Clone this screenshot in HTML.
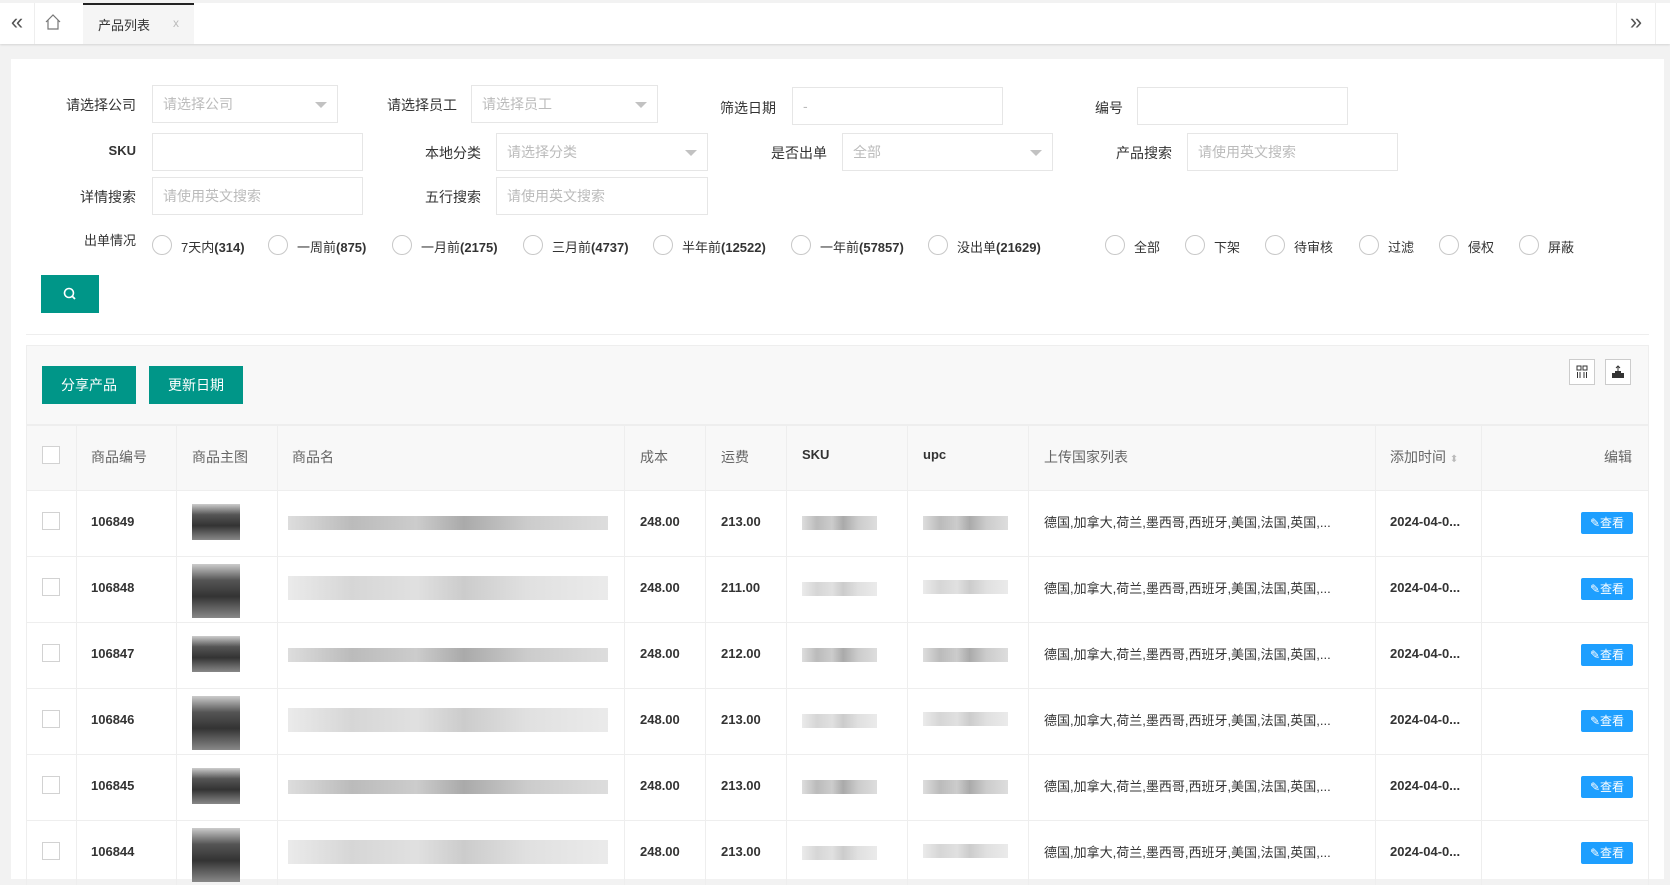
<!DOCTYPE html>
<html><head><meta charset="utf-8"><style>
*{box-sizing:border-box;margin:0;padding:0}
body{width:1670px;height:872px;overflow:hidden;background:#f2f2f2;font-family:"Liberation Sans","Noto Sans CJK SC",sans-serif;font-size:14px;color:#333;position:relative}
.a{position:absolute}
.top{left:0;top:0;width:1670px;height:44px;background:#fff;border-top:3px solid #f2f2f2;box-shadow:0 1px 2px rgba(0,0,0,.12)}
.panel{left:11px;top:59px;width:1653px;height:820px;background:#fff}
.lbl{font-size:14px;color:#333;text-align:right;width:100px}
.inp{height:38px;border:1px solid #e6e6e6;background:#fff;color:#bbb;font-size:14px;padding-left:10px;line-height:36px}
.tri{position:absolute;right:10px;top:16px;border:6px solid transparent;border-top:6px solid #c2c2c2}
.rad{width:20px;height:20px;border:1px solid #c8c8c8;border-radius:50%}
.rt{font-size:13px;color:#333}
.btn{background:#009688;color:#fff;text-align:center;font-size:14px}
.col{top:425px;width:1px;height:460px;background:#eee}
.row{left:26px;width:1623px;height:1px;background:#eee}
.th{top:447px;font-size:14px;color:#666}
.td{font-size:13px;font-weight:bold;color:#333}
.cb{width:18px;height:18px;border:1px solid #d2d2d2;background:#fff}
.view{width:52px;height:22px;background:#1E9FFF;color:#fff;font-size:12px;line-height:22px;text-align:center;border-radius:2px}
.bar{height:14px;background:linear-gradient(90deg,#ddd,#bbb 20%,#ccc 40%,#aaa 55%,#ccc 75%,#ddd)}
.img{width:48px;height:54px;background:linear-gradient(180deg,#ccc,#555 30%,#333 60%,#888)}
.ct{font-size:13px}
</style></head><body>
<div class="a top"></div>
<div class="a" style="left:0;top:3px;width:35px;height:41px;border-right:1px solid #eee;font-size:22px;text-align:center;line-height:38px;color:#555">«</div>
<div class="a" style="left:44px;top:14px"><svg width="18" height="16" viewBox="0 0 18 16"><path d="M2 8 L9 1 L16 8 M4 6 V15 H14 V6" fill="none" stroke="#777" stroke-width="1.2"/></svg></div>
<div class="a" style="left:83px;top:3px;width:111px;height:41px;background:#f5f5f5;border-top:2px solid #222"></div>
<div class="a" style="left:98px;top:15px;font-size:13px">产品列表</div>
<div class="a" style="left:173px;top:16px;font-size:12px;color:#bbb">x</div>
<div class="a" style="left:1616px;top:3px;width:40px;height:41px;border-left:1px solid #eee;border-right:1px solid #eee;font-size:22px;text-align:center;line-height:38px;color:#555">»</div>

<div class="a panel"></div>
<div class="a lbl" style="left:36px;top:95px">请选择公司</div>
<div class="a inp" style="left:152px;top:85px;width:186px">请选择公司<span class="tri"></span></div>
<div class="a lbl" style="left:357px;top:95px">请选择员工</div>
<div class="a inp" style="left:471px;top:85px;width:187px">请选择员工<span class="tri"></span></div>
<div class="a lbl" style="left:676px;top:98px">筛选日期</div>
<div class="a inp" style="left:792px;top:87px;width:211px">-</div>
<div class="a lbl" style="left:1023px;top:98px">编号</div>
<div class="a inp" style="left:1137px;top:87px;width:211px"></div>
<div class="a lbl" style="left:36px;top:143px;font-weight:bold;font-size:13px">SKU</div>
<div class="a inp" style="left:152px;top:133px;width:211px"></div>
<div class="a lbl" style="left:381px;top:143px">本地分类</div>
<div class="a inp" style="left:496px;top:133px;width:212px">请选择分类<span class="tri"></span></div>
<div class="a lbl" style="left:727px;top:143px">是否出单</div>
<div class="a inp" style="left:842px;top:133px;width:211px">全部<span class="tri"></span></div>
<div class="a lbl" style="left:1072px;top:143px">产品搜索</div>
<div class="a inp" style="left:1187px;top:133px;width:211px">请使用英文搜索</div>
<div class="a lbl" style="left:36px;top:187px">详情搜索</div>
<div class="a inp" style="left:152px;top:177px;width:211px">请使用英文搜索</div>
<div class="a lbl" style="left:381px;top:187px">五行搜索</div>
<div class="a inp" style="left:496px;top:177px;width:212px">请使用英文搜索</div>
<div class="a lbl" style="left:36px;top:230px;font-size:13px">出单情况</div>
<div class="a rad" style="left:152px;top:235px"></div><div class="a rt" style="left:181px;top:237px">7天内<b>(314)</b></div>
<div class="a rad" style="left:268px;top:235px"></div><div class="a rt" style="left:297px;top:237px">一周前<b>(875)</b></div>
<div class="a rad" style="left:392px;top:235px"></div><div class="a rt" style="left:421px;top:237px">一月前<b>(2175)</b></div>
<div class="a rad" style="left:523px;top:235px"></div><div class="a rt" style="left:552px;top:237px">三月前<b>(4737)</b></div>
<div class="a rad" style="left:653px;top:235px"></div><div class="a rt" style="left:682px;top:237px">半年前<b>(12522)</b></div>
<div class="a rad" style="left:791px;top:235px"></div><div class="a rt" style="left:820px;top:237px">一年前<b>(57857)</b></div>
<div class="a rad" style="left:928px;top:235px"></div><div class="a rt" style="left:957px;top:237px">没出单<b>(21629)</b></div>
<div class="a rad" style="left:1105px;top:235px"></div><div class="a rt" style="left:1134px;top:237px">全部</div>
<div class="a rad" style="left:1185px;top:235px"></div><div class="a rt" style="left:1214px;top:237px">下架</div>
<div class="a rad" style="left:1265px;top:235px"></div><div class="a rt" style="left:1294px;top:237px">待审核</div>
<div class="a rad" style="left:1359px;top:235px"></div><div class="a rt" style="left:1388px;top:237px">过滤</div>
<div class="a rad" style="left:1439px;top:235px"></div><div class="a rt" style="left:1468px;top:237px">侵权</div>
<div class="a rad" style="left:1519px;top:235px"></div><div class="a rt" style="left:1548px;top:237px">屏蔽</div>
<div class="a btn" style="left:41px;top:275px;width:58px;height:38px"><svg width="16" height="16" viewBox="0 0 16 16" style="margin-top:11px"><circle cx="7" cy="7" r="4.5" fill="none" stroke="#fff" stroke-width="1.6"/><path d="M10 10 L13 13" stroke="#fff" stroke-width="1.8"/></svg></div>
<div class="a" style="left:26px;top:334px;width:1623px;height:1px;background:#eee"></div>
<div class="a" style="left:26px;top:345px;width:1623px;height:80px;background:#f8f8f8;border:1px solid #eee"></div>
<div class="a btn" style="left:42px;top:366px;width:94px;height:38px;line-height:38px">分享产品</div>
<div class="a btn" style="left:149px;top:366px;width:94px;height:38px;line-height:38px">更新日期</div>
<div class="a" style="left:1569px;top:359px;width:26px;height:26px;border:1px solid #ccc;background:#fff"><svg width="24" height="24" viewBox="0 0 24 24"><rect x="7" y="6" width="4" height="4" fill="none" stroke="#333"/><rect x="13" y="6" width="4" height="4" fill="none" stroke="#333"/><path d="M7.5 12v6M10 12v6M14 12v6M16.5 12v6" stroke="#333"/></svg></div>
<div class="a" style="left:1605px;top:359px;width:26px;height:26px;border:1px solid #ccc;background:#fff"><svg width="24" height="24" viewBox="0 0 24 24"><path d="M6 13h12v5H6z" fill="#333"/><path d="M12 6v6M10 8l2-2 2 2" stroke="#333" fill="none"/><rect x="9" y="11" width="6" height="2" fill="#333"/></svg></div>
<div class="a" style="left:26px;top:425px;width:1623px;height:65px;background:#f8f8f8"></div>
<div class="a" style="left:26px;top:425px;width:1623px;height:460px;border:1px solid #eee;border-bottom:none"></div>
<div class="a col" style="left:76px"></div><div class="a col" style="left:176px"></div><div class="a col" style="left:277px"></div><div class="a col" style="left:624px"></div><div class="a col" style="left:705px"></div><div class="a col" style="left:786px"></div><div class="a col" style="left:907px"></div><div class="a col" style="left:1028px"></div><div class="a col" style="left:1375px"></div><div class="a col" style="left:1481px"></div>
<div class="a row" style="top:490px"></div><div class="a row" style="top:556px"></div><div class="a row" style="top:622px"></div><div class="a row" style="top:688px"></div><div class="a row" style="top:754px"></div><div class="a row" style="top:820px"></div>
<div class="a cb" style="left:42px;top:446px"></div>
<div class="a th" style="left:91px">商品编号</div>
<div class="a th" style="left:192px">商品主图</div>
<div class="a th" style="left:292px">商品名</div>
<div class="a th" style="left:640px">成本</div>
<div class="a th" style="left:721px">运费</div>
<div class="a th" style="left:802px;font-weight:bold;font-size:13px;color:#333">SKU</div>
<div class="a th" style="left:923px;font-weight:bold;font-size:13px;color:#333">upc</div>
<div class="a th" style="left:1044px">上传国家列表</div>
<div class="a th" style="left:1390px">添加时间 <span style="color:#bbb;font-size:10px">⬍</span></div>
<div class="a th" style="left:1604px">编辑</div>

<div class="a cb" style="left:42px;top:512px"></div><div class="a td" style="left:91px;top:514px">106849</div><div class="a img" style="left:192px;top:504px;height:36px"></div><div class="a bar" style="left:288px;top:516px;width:320px"></div><div class="a td" style="left:640px;top:514px">248.00</div><div class="a td" style="left:721px;top:514px">213.00</div><div class="a bar" style="left:802px;top:516px;width:75px"></div><div class="a bar" style="left:923px;top:516px;width:85px"></div><div class="a ct" style="left:1044px;top:512px">德国,加拿大,荷兰,墨西哥,西班牙,美国,法国,英国,...</div><div class="a td" style="left:1390px;top:514px">2024-04-0...</div><div class="a view" style="left:1581px;top:512px">✎查看</div>
<div class="a cb" style="left:42px;top:578px"></div><div class="a td" style="left:91px;top:580px">106848</div><div class="a img" style="left:192px;top:564px"></div><div class="a bar" style="left:288px;top:576px;width:320px;height:24px;opacity:.6"></div><div class="a td" style="left:640px;top:580px">248.00</div><div class="a td" style="left:721px;top:580px">211.00</div><div class="a bar" style="left:802px;top:582px;width:75px;opacity:.6"></div><div class="a bar" style="left:923px;top:580px;width:85px;opacity:.6"></div><div class="a ct" style="left:1044px;top:578px">德国,加拿大,荷兰,墨西哥,西班牙,美国,法国,英国,...</div><div class="a td" style="left:1390px;top:580px">2024-04-0...</div><div class="a view" style="left:1581px;top:578px">✎查看</div>
<div class="a cb" style="left:42px;top:644px"></div><div class="a td" style="left:91px;top:646px">106847</div><div class="a img" style="left:192px;top:636px;height:36px"></div><div class="a bar" style="left:288px;top:648px;width:320px"></div><div class="a td" style="left:640px;top:646px">248.00</div><div class="a td" style="left:721px;top:646px">212.00</div><div class="a bar" style="left:802px;top:648px;width:75px"></div><div class="a bar" style="left:923px;top:648px;width:85px"></div><div class="a ct" style="left:1044px;top:644px">德国,加拿大,荷兰,墨西哥,西班牙,美国,法国,英国,...</div><div class="a td" style="left:1390px;top:646px">2024-04-0...</div><div class="a view" style="left:1581px;top:644px">✎查看</div>
<div class="a cb" style="left:42px;top:710px"></div><div class="a td" style="left:91px;top:712px">106846</div><div class="a img" style="left:192px;top:696px"></div><div class="a bar" style="left:288px;top:708px;width:320px;height:24px;opacity:.6"></div><div class="a td" style="left:640px;top:712px">248.00</div><div class="a td" style="left:721px;top:712px">213.00</div><div class="a bar" style="left:802px;top:714px;width:75px;opacity:.6"></div><div class="a bar" style="left:923px;top:712px;width:85px;opacity:.6"></div><div class="a ct" style="left:1044px;top:710px">德国,加拿大,荷兰,墨西哥,西班牙,美国,法国,英国,...</div><div class="a td" style="left:1390px;top:712px">2024-04-0...</div><div class="a view" style="left:1581px;top:710px">✎查看</div>
<div class="a cb" style="left:42px;top:776px"></div><div class="a td" style="left:91px;top:778px">106845</div><div class="a img" style="left:192px;top:768px;height:36px"></div><div class="a bar" style="left:288px;top:780px;width:320px"></div><div class="a td" style="left:640px;top:778px">248.00</div><div class="a td" style="left:721px;top:778px">213.00</div><div class="a bar" style="left:802px;top:780px;width:75px"></div><div class="a bar" style="left:923px;top:780px;width:85px"></div><div class="a ct" style="left:1044px;top:776px">德国,加拿大,荷兰,墨西哥,西班牙,美国,法国,英国,...</div><div class="a td" style="left:1390px;top:778px">2024-04-0...</div><div class="a view" style="left:1581px;top:776px">✎查看</div>
<div class="a cb" style="left:42px;top:842px"></div><div class="a td" style="left:91px;top:844px">106844</div><div class="a img" style="left:192px;top:828px"></div><div class="a bar" style="left:288px;top:840px;width:320px;height:24px;opacity:.6"></div><div class="a td" style="left:640px;top:844px">248.00</div><div class="a td" style="left:721px;top:844px">213.00</div><div class="a bar" style="left:802px;top:846px;width:75px;opacity:.6"></div><div class="a bar" style="left:923px;top:844px;width:85px;opacity:.6"></div><div class="a ct" style="left:1044px;top:842px">德国,加拿大,荷兰,墨西哥,西班牙,美国,法国,英国,...</div><div class="a td" style="left:1390px;top:844px">2024-04-0...</div><div class="a view" style="left:1581px;top:842px">✎查看</div>
</body></html>
